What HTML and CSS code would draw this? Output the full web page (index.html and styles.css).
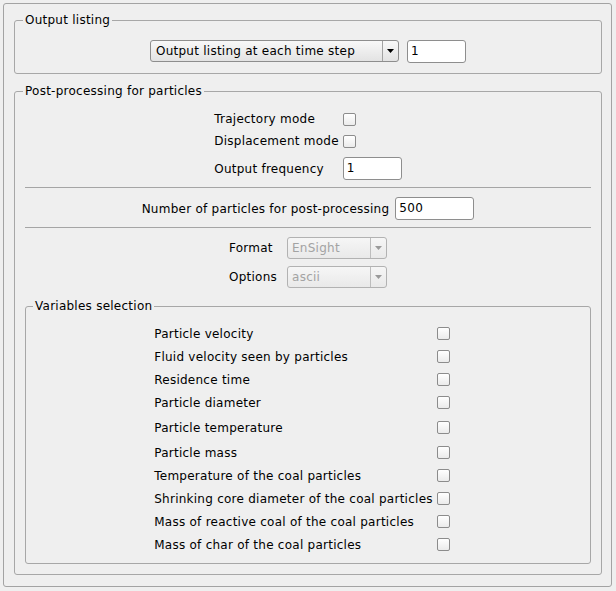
FILE: index.html
```html
<!DOCTYPE html>
<html>
<head>
<meta charset="utf-8">
<title>Post-processing</title>
<link rel="stylesheet" href="styles.css">
</head>
<body>
<div class="panel">
  <div class="group g-output">
    <div class="group-title">Output listing</div>
    <div class="out-row">
      <div class="combo combo-wide">
        <span class="combo-text">Output listing at each time step</span>
        <span class="combo-btn"><svg width="7" height="4" viewBox="0 0 7 4"><path d="M0 0H7L3.5 4Z" fill="#000"/></svg></span>
      </div>
      <div class="lineedit le-small">1</div>
    </div>
  </div>

  <div class="group g-post">
    <div class="group-title">Post-processing for particles</div>
    <div class="modes">
      <div class="cell">Trajectory mode</div>
      <div class="cell"><span class="check"></span></div>
      <div class="cell">Displacement mode</div>
      <div class="cell"><span class="check"></span></div>
      <div class="cell cell-edit">Output frequency</div>
      <div class="cell cell-edit"><div class="lineedit le-freq">1</div></div>
    </div>
    <div class="sep"></div>
    <div class="n-row">
      <span>Number of particles for post-processing</span>
      <div class="lineedit le-num">500</div>
    </div>
    <div class="sep"></div>
    <div class="fmt">
      <div class="cell">Format</div>
      <div class="combo combo-small disabled">
        <span class="combo-text">EnSight</span>
        <span class="combo-btn"><svg width="7" height="4" viewBox="0 0 7 4"><path d="M0 0H7L3.5 4Z" fill="#9a9a9a"/></svg></span>
      </div>
      <div class="cell">Options</div>
      <div class="combo combo-small disabled">
        <span class="combo-text">ascii</span>
        <span class="combo-btn"><svg width="7" height="4" viewBox="0 0 7 4"><path d="M0 0H7L3.5 4Z" fill="#9a9a9a"/></svg></span>
      </div>
    </div>

    <div class="group g-vars">
      <div class="group-title vars-title">Variables selection</div>
      <div class="vars">
        <div class="cell">Particle velocity</div><div class="cell"><span class="check"></span></div>
        <div class="cell">Fluid velocity seen by particles</div><div class="cell"><span class="check"></span></div>
        <div class="cell">Residence time</div><div class="cell"><span class="check"></span></div>
        <div class="cell">Particle diameter</div><div class="cell"><span class="check"></span></div>
        <div class="cell">Particle temperature</div><div class="cell"><span class="check"></span></div>
        <div class="cell">Particle mass</div><div class="cell"><span class="check"></span></div>
        <div class="cell">Temperature of the coal particles</div><div class="cell"><span class="check"></span></div>
        <div class="cell">Shrinking core diameter of the coal particles</div><div class="cell"><span class="check"></span></div>
        <div class="cell">Mass of reactive coal of the coal particles</div><div class="cell"><span class="check"></span></div>
        <div class="cell">Mass of char of the coal particles</div><div class="cell"><span class="check"></span></div>
      </div>
    </div>
  </div>
</div>
</body>
</html>
```

FILE: styles.css
```css
html, body {
  margin: 0;
  padding: 0;
  background: #efefef;
}
body {
  font-family: "DejaVu Sans", "Liberation Sans", sans-serif;
  font-size: 12px;
  line-height: 14px;
  letter-spacing: 0.25px;
  color: #000;
}
.panel {
  margin: 3px;
  width: 609px;
  box-sizing: border-box;
  border: 1px solid #a3a3a3;
  border-radius: 3px;
  padding: 16px 9px 11px 10px;
}
.group {
  border: 1px solid #a7a7a7;
  border-radius: 3px;
}
.group-title {
  width: max-content;
  margin: -8px 0 0 8px;
  padding: 0 2px;
  background: #efefef;
  line-height: 14px;
  white-space: nowrap;
}
.vars-title {
  margin-left: 7px;
}
.g-output {
  padding-bottom: 10px;
}
.out-row {
  display: flex;
  justify-content: center;
  align-items: flex-start;
  gap: 8px;
  margin-top: 13px;
}
.combo {
  display: flex;
  height: 22px;
  box-sizing: border-box;
  border: 1px solid #8e8e8e;
  border-radius: 3px;
  background: linear-gradient(#f8f8f8, #e3e3e3);
}
.combo-wide { width: 249px; }
.combo-small { width: 100px; }
.combo-text {
  flex: 1;
  padding-left: 5px;
  line-height: 20px;
  white-space: nowrap;
  overflow: hidden;
}
.combo-small .combo-text { padding-left: 4px; }
.combo-btn {
  width: 15px;
  border-left: 1px solid #a2a2a2;
  display: flex;
  align-items: center;
  justify-content: center;
}
.combo-btn svg { display: block; }
.combo.disabled {
  color: #a3a3a3;
  border-color: #b2b2b2;
  background: linear-gradient(#f6f6f6, #e9e9e9);
}
.combo.disabled .combo-btn { border-left-color: #bdbdbd; }
.lineedit {
  height: 23px;
  box-sizing: border-box;
  border: 1px solid #8e8e8e;
  border-radius: 3px;
  background: #fff;
  padding-left: 3px;
  line-height: 21px;
}
.le-small { width: 59px; }
.le-freq { width: 60px; }
.le-num { width: 79px; }
.check {
  display: block;
  width: 13px;
  height: 13px;
  box-sizing: border-box;
  border: 1px solid #8c8c8c;
  border-radius: 2px;
  background: linear-gradient(#ffffff, #ebebeb);
}
.g-post {
  margin-top: 17px;
  padding-bottom: 10px;
}
.cell {
  display: flex;
  align-items: center;
  white-space: nowrap;
}
.modes {
  display: grid;
  grid-template-columns: auto 59px;
  grid-template-rows: 22px 22px 28px;
  align-items: end;
  column-gap: 4px;
  justify-content: center;
  margin-top: 10px;
}
.modes .cell { height: 22px; }
.modes .cell-edit { height: 23px; }
.sep {
  height: 1px;
  background: #a5a5a5;
  margin: 7px 10px 0;
}
.n-row {
  display: flex;
  justify-content: center;
  align-items: center;
  gap: 6px;
  margin: 9px 0 7px;
}
.fmt {
  display: grid;
  grid-template-columns: auto 100px;
  grid-auto-rows: 22px;
  column-gap: 10px;
  row-gap: 7px;
  justify-content: center;
  margin-top: 9px;
}
.g-vars {
  margin: 18px 10px 0;
  padding-bottom: 7px;
}
.vars {
  display: grid;
  grid-template-columns: auto 25px;
  grid-template-rows: repeat(4, 23px) 25px 25px repeat(4, 23px);
  align-items: end;
  column-gap: 4px;
  justify-content: center;
  margin-top: 9px;
}
.vars .cell { height: 23px; }
```
